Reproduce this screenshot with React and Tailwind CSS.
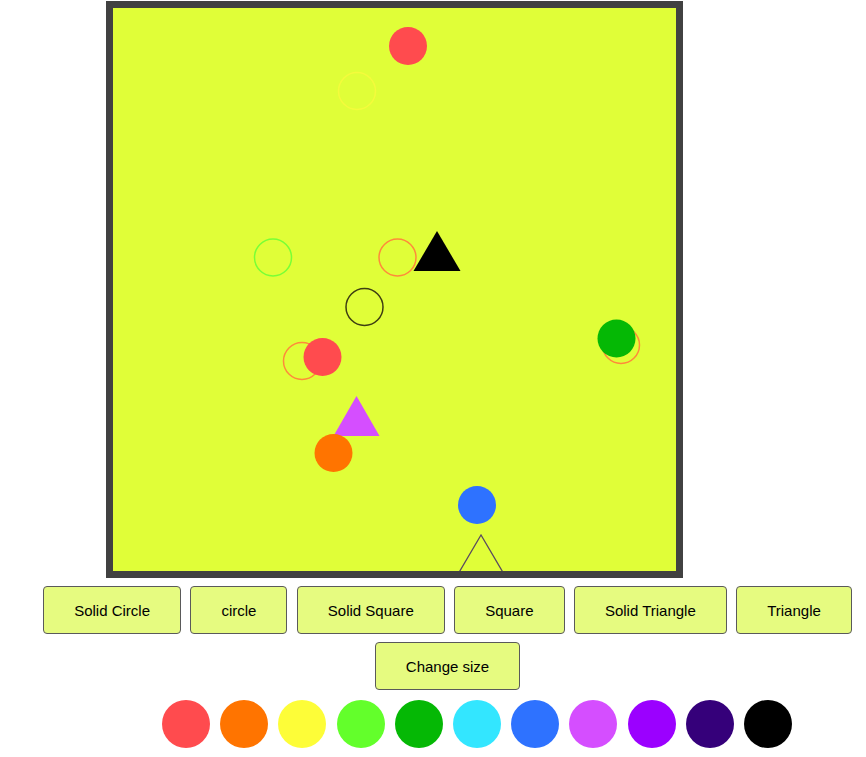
import React from 'react'

const buttons = ['Solid Circle', 'circle', 'Solid Square', 'Square', 'Solid Triangle', 'Triangle']

const palette = [
  '#ff4b4e', '#ff7400', '#fdfd38', '#63ff2b', '#05b805', '#33e6ff',
  '#2e72ff', '#d54eff', '#9b00ff', '#35007a', '#000000',
]

// shapes already placed on the board (inner coords, 563x563)
function Board() {
  return (
    <svg width="563" height="563" viewBox="0 0 563 563" className="block">
      <circle cx="295" cy="38" r="19" fill="#ff4b4e" />
      <circle cx="244" cy="83" r="18.5" fill="none" stroke="#f4fb3c" strokeWidth="1.5" />
      <circle cx="160" cy="249.5" r="18.5" fill="none" stroke="#78ff36" strokeWidth="1.5" />
      <circle cx="284.5" cy="249.5" r="18.5" fill="none" stroke="#ff8a3a" strokeWidth="1.5" />
      <polygon points="324,223 300.5,263 347.5,263" fill="#000" />
      <circle cx="251.5" cy="299" r="18.5" fill="none" stroke="#3e3e12" strokeWidth="1.5" />
      <circle cx="189" cy="353" r="18.5" fill="none" stroke="#ff8a3a" strokeWidth="1.5" />
      <circle cx="209.5" cy="349" r="19" fill="#ff4b4e" />
      <polygon points="243.5,388 220.5,428 266.5,428" fill="#d54eff" />
      <circle cx="220.5" cy="445" r="19" fill="#ff7400" />
      <circle cx="508" cy="337" r="18.5" fill="none" stroke="#ff8a3a" strokeWidth="1.5" />
      <circle cx="503.5" cy="330.5" r="19" fill="#05b805" />
      <circle cx="364" cy="497" r="19" fill="#2e72ff" />
      <polygon points="368,527 344.5,567 391.5,567" fill="none" stroke="#5a4a60" strokeWidth="1.3" />
    </svg>
  )
}

export default function App() {
  return (
    <div className="min-h-screen bg-white pt-[1px]" style={{ fontFamily: '"Liberation Sans", Arial, sans-serif' }}>
      {/* Canvas */}
      <div className="ml-[106px] w-[577px] h-[577px] border-[7px] border-[#414141] bg-[#e0fe38] overflow-hidden">
        <Board />
      </div>

      {/* Tool buttons */}
      <div className="ml-[43px] mt-[8px] w-[809px] flex flex-wrap justify-center gap-x-[9.4px] gap-y-[8px]">
        {buttons.map(b => (
          <button
            key={b}
            className="h-[48px] px-[30px] pt-[2px] bg-[#e6fb80] border border-[#5a5a5a] rounded-[4px] text-[15px] text-black"
          >
            {b}
          </button>
        ))}
        <button className="h-[48px] px-[30px] pt-[2px] bg-[#e6fb80] border border-[#5a5a5a] rounded-[4px] text-[15px] text-black">
          Change size
        </button>
      </div>

      {/* Colour picker */}
      <div className="ml-[162px] mt-[10px] flex gap-[10.2px]">
        {palette.map(c => (
          <div key={c} className="w-[48px] h-[48px] rounded-full" style={{ backgroundColor: c }} />
        ))}
      </div>
    </div>
  )
}
